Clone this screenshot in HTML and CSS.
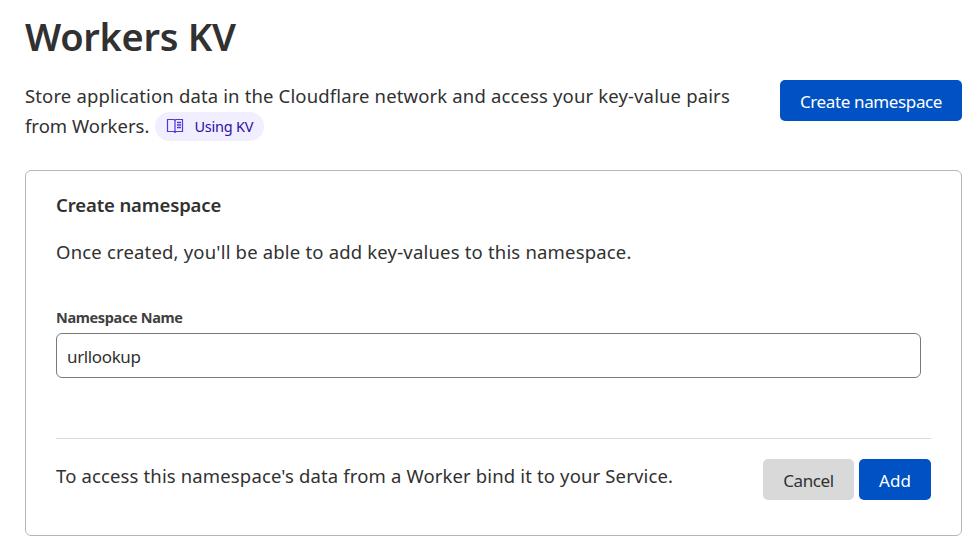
FILE: index.html
```html
<!DOCTYPE html>
<html lang="en">
<head>
<meta charset="utf-8">
<title>Workers KV</title>
<link rel="stylesheet" href="styles.css">
</head>
<body>
<main class="page">
  <h1 class="title">Workers KV</h1>
  <header class="intro">
    <div class="intro-text">
      <p class="line lead">Store application data in the Cloudflare network and access your key-value pairs</p>
      <p class="line"><span>from Workers.</span>
        <a class="pill"><svg class="book" viewBox="0 0 18 16" width="18" height="16"><path d="M9 2.500 8 1.500H1.500v12H8l1 1 1-1h6.500v-12H10zV14.500"/><path class="rows" d="M11 4.500h4M11 7h4M11 9.500h4"/></svg><span>Using KV</span></a>
      </p>
    </div>
    <button class="btn primary create">Create namespace</button>
  </header>
  <section class="card">
    <h2 class="card-title">Create namespace</h2>
    <p class="desc">Once created, you'll be able to add key-values to this namespace.</p>
    <label class="label" for="ns">Namespace Name</label>
    <input class="input" id="ns" value="urllookup">
    <footer class="footer">
      <p class="note">To access this namespace's data from a Worker bind it to your Service.</p>
      <button class="btn cancel">Cancel</button>
      <button class="btn primary add">Add</button>
    </footer>
  </section>
</main>
</body>
</html>
```
FILE: styles.css
```css
* { box-sizing: border-box; }
body { margin: 0; background: #fff; color: #313131; font-family: "Noto Sans", "Open Sans", sans-serif; font-size: 18.5px; }
h1, h2, p { margin: 0; font-weight: 400; white-space: nowrap; }
.page { padding: 12px 15px 0 25px; }
.title { height: 50px; line-height: 48px; font-size: 38px; font-weight: 600; letter-spacing: -0.3px; }
.intro { display: flex; justify-content: space-between; margin-top: 18px; height: 90px; }
.line { display: flex; align-items: center; height: 30px; line-height: 30px; }
.lead { margin-top: 1px; letter-spacing: 0.14px; }
.pill { display: flex; align-items: center; gap: 10px; width: 109px; height: 29px; margin-left: 6px; padding-left: 11px; border-radius: 15px; background: #f0eeff; color: #2b0fa8; font-size: 14.5px; letter-spacing: -0.22px; }
.book { flex: none; fill: none; stroke: #4f37d8; stroke-width: 1.2; }
.rows { stroke-width: 1.4; }
.btn { height: 41px; border: 0; border-radius: 5px; padding: 2px 0 0; font: inherit; font-size: 17px; letter-spacing: -0.37px; text-align: center; }
.primary { background: #0051c3; color: #fff; }
.create { width: 182px; }
.card { height: 366px; border: 1px solid #b6b6b6; border-radius: 6px; padding: 20px 30px 0; }
.card-title { height: 28px; line-height: 28px; font-size: 18.5px; font-weight: 600; letter-spacing: -0.12px; }
.desc { height: 30px; line-height: 30px; margin-top: 18px; letter-spacing: 0.18px; }
.label { display: block; height: 24px; line-height: 24px; margin-top: 38px; font-size: 14.5px; font-weight: 700; letter-spacing: -0.35px; color: #404040; }
.input { display: block; width: 865px; height: 45px; margin-top: 4px; border: 1px solid #797979; border-radius: 6px; padding: 2px 10px 0; font: inherit; font-size: 17px; letter-spacing: -0.37px; color: #313131; }
.footer { display: flex; margin-top: 60px; border-top: 1px solid #d9d9d9; padding-top: 20px; }
.note { flex: 1; height: 34px; line-height: 34px; letter-spacing: 0.14px; }
.cancel { width: 91px; background: #d9d9d9; color: #313131; }
.add { width: 72px; margin-left: 5px; letter-spacing: 0; }
```
